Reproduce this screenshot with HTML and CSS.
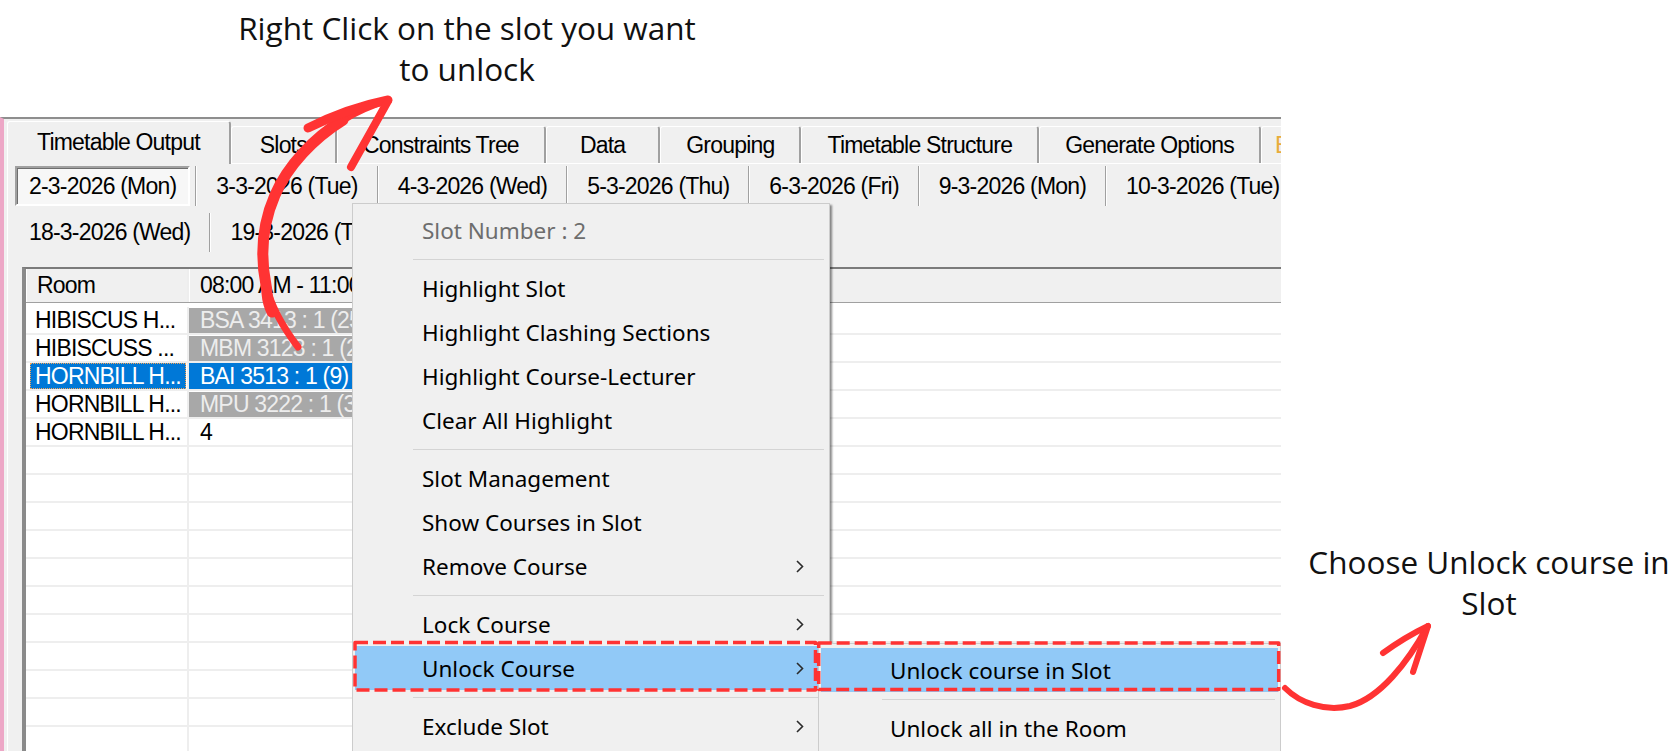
FILE: index.html
```html
<!DOCTYPE html>
<html lang="en">
<head>
<meta charset="utf-8">
<title>Timetable Output</title>
<link rel="stylesheet" href="styles.css">
</head>
<body>
<div class="page">
  <div class="note note-top">Right Click on the slot you want<br>to unlock</div>
  <div class="note note-side">Choose Unlock course in<br>Slot</div>

  <div class="window">
    <div class="tabstrip">
      <div class="tab active">Timetable Output</div>
      <div class="tab slim">Slots</div>
      <div class="tab">Constraints Tree</div>
      <div class="tab narrow">Data</div>
      <div class="tab">Grouping</div>
      <div class="tab">Timetable Structure</div>
      <div class="tab">Generate Options</div>
      <div class="tab more">Export</div>
    </div>

    <div class="tabbody">
      <div class="dayrow">
        <div class="day active">2-3-2026 (Mon)</div><span class="sep"></span>
        <div class="day">3-3-2026 (Tue)</div><span class="sep"></span>
        <div class="day">4-3-2026 (Wed)</div><span class="sep"></span>
        <div class="day">5-3-2026 (Thu)</div><span class="sep"></span>
        <div class="day">6-3-2026 (Fri)</div><span class="sep"></span>
        <div class="day">9-3-2026 (Mon)</div><span class="sep"></span>
        <div class="day">10-3-2026 (Tue)</div><span class="sep"></span>
        <div class="day">11-3-2026 (Wed)</div>
      </div>
      <div class="dayrow">
        <div class="day">18-3-2026 (Wed)</div><span class="sep"></span>
        <div class="day">19-3-2026 (Thu)</div>
      </div>

      <div class="grid">
        <div class="ghead">
          <div class="hcell c1">Room</div>
          <div class="hcell c2">08:00 AM - 11:00 AM</div>
        </div>
        <div class="gbody">
          <div class="grow"><div class="cell c1">HIBISCUS H...</div><div class="cell c2 locked">BSA 3413 : 1 (25)</div></div>
          <div class="grow"><div class="cell c1">HIBISCUSS ...</div><div class="cell c2 locked">MBM 3123 : 1 (25)</div></div>
          <div class="grow"><div class="cell c1 sel"><span class="lbl">HORNBILL H...</span></div><div class="cell c2 sel">BAI 3513 : 1 (9)</div></div>
          <div class="grow"><div class="cell c1">HORNBILL H...</div><div class="cell c2 locked">MPU 3222 : 1 (30)</div></div>
          <div class="grow"><div class="cell c1">HORNBILL H...</div><div class="cell c2">4</div></div>
          <div class="grow"><div class="cell c1"></div><div class="cell c2"></div></div>
          <div class="grow"><div class="cell c1"></div><div class="cell c2"></div></div>
          <div class="grow"><div class="cell c1"></div><div class="cell c2"></div></div>
          <div class="grow"><div class="cell c1"></div><div class="cell c2"></div></div>
          <div class="grow"><div class="cell c1"></div><div class="cell c2"></div></div>
          <div class="grow"><div class="cell c1"></div><div class="cell c2"></div></div>
          <div class="grow"><div class="cell c1"></div><div class="cell c2"></div></div>
          <div class="grow"><div class="cell c1"></div><div class="cell c2"></div></div>
          <div class="grow"><div class="cell c1"></div><div class="cell c2"></div></div>
          <div class="grow"><div class="cell c1"></div><div class="cell c2"></div></div>
          <div class="grow"><div class="cell c1"></div><div class="cell c2"></div></div>
        </div>
      </div>
    </div>
  </div>

  <!-- context menu for the selected slot -->
  <div class="menu ctx">
    <div class="mi disabled"><span class="label">Slot Number : 2</span></div>
    <div class="msep"></div>
    <div class="mi"><span class="label">Highlight Slot</span></div>
    <div class="mi"><span class="label">Highlight Clashing Sections</span></div>
    <div class="mi"><span class="label">Highlight Course-Lecturer</span></div>
    <div class="mi"><span class="label">Clear All Highlight</span></div>
    <div class="msep"></div>
    <div class="mi"><span class="label">Slot Management</span></div>
    <div class="mi"><span class="label">Show Courses in Slot</span></div>
    <div class="mi"><span class="label">Remove Course</span><svg class="chev" viewBox="0 0 8 13"><path d="M1 1l5.5 5.5L1 12"/></svg></div>
    <div class="msep"></div>
    <div class="mi"><span class="label">Lock Course</span><svg class="chev" viewBox="0 0 8 13"><path d="M1 1l5.5 5.5L1 12"/></svg></div>
    <div class="mi hot"><span class="label">Unlock Course</span><svg class="chev" viewBox="0 0 8 13"><path d="M1 1l5.5 5.5L1 12"/></svg></div>
    <div class="msep"></div>
    <div class="mi"><span class="label">Exclude Slot</span><svg class="chev" viewBox="0 0 8 13"><path d="M1 1l5.5 5.5L1 12"/></svg></div>
  </div>

  <!-- Unlock Course submenu -->
  <div class="menu sub">
    <div class="mi hot"><span class="label">Unlock course in Slot</span></div>
    <div class="msep"></div>
    <div class="mi"><span class="label">Unlock all in the Room</span></div>
  </div>

  <!-- hand-drawn callouts -->
  <svg class="marks" viewBox="0 0 1678 751">
    <g fill="none" stroke="#ff3333" stroke-linecap="round" stroke-linejoin="round">
      <path d="M298,347 C285,330 272,310 266,285 C260,255 262,225 275,195 C288,165 314,138 343,120 C358,111 372,105 388,100" stroke-width="7"/>
      <path d="M272,312 C266,300 268,296 266,285 C260,255 262,225 275,195 C288,165 314,138 343,120" stroke-width="11"/>
      <path d="M308,128 C332,116 358,106 388,100" stroke-width="9"/>
      <path d="M388,101 L351,167" stroke-width="8"/>

      <path d="M1285,688 C1300,703 1325,712 1350,706 C1380,698 1408,662 1427,627" stroke-width="6"/>
      <path d="M1383,653 Q1405,637 1428,626" stroke-width="6"/>
      <path d="M1428,626 L1413,672" stroke-width="6"/>

      <rect x="355" y="642.5" width="460.5" height="47.5" stroke-width="3.5" stroke-dasharray="13 5" stroke-linecap="butt"/>
      <rect x="818.7" y="643" width="460" height="46.5" stroke-width="3.5" stroke-dasharray="13 5" stroke-linecap="butt"/>
    </g>
  </svg>
</div>
</body>
</html>
```

FILE: styles.css
```css
* { box-sizing: border-box; }

html, body {
  margin: 0;
  padding: 0;
  background: #ffffff;
}

.page {
  position: relative;
  width: 1678px;
  height: 751px;
  overflow: hidden;
  background: #ffffff;
}

/* ---------- captions ---------- */
.note {
  position: absolute;
  font-family: "Open Sans", "Noto Sans", sans-serif;
  font-size: 31.5px;
  line-height: 41px;
  color: #111111;
  text-align: center;
  white-space: nowrap;
}
.note-top  { left: 167px;  width: 600px; top: 7px; }
.note-side { left: 1289px; width: 400px; top: 541px; }

/* ---------- application window ---------- */
.window {
  margin-top: 117px;
  width: 1281px;
  height: 634px;
  background: #f0f0f0;
  border-left: 4px solid #eda7c6;
  border-top: 2px solid #8e8e8e;
  padding-left: 3px;
  overflow: hidden;
  font-family: "Liberation Sans", Arial, sans-serif;
  font-size: 23px;
  letter-spacing: -0.8px;
  color: #000000;
}

/* main tab strip */
.tabstrip {
  display: flex;
  align-items: flex-end;
  height: 44px;
  padding-top: 2px;
  white-space: nowrap;
}
.tab {
  flex: none;
  height: 37px;
  padding: 0 25px;
  display: flex;
  align-items: center;
  background: #f0f0f0;
  border-top: 1px solid #ffffff;
  border-left: 1px solid #ffffff;
  border-right: 2px solid #a0a0a0;
  border-radius: 3px 3px 0 0;
}
.tab.slim { padding: 0 28px; }
.tab.narrow { padding: 0 33px; }
.tab.active {
  position: relative;
  z-index: 1;
  height: 43px;
  margin-bottom: -1px;
  padding: 0 29px 2px;
}
.tab.more {
  padding-left: 13px;
  color: #e8ad3c;
}

.tabbody {
  border-top: 1px solid #ffffff;
  border-left: 1px solid #ffffff;
  padding: 2px 0 0 7px;
}

/* day buttons */
.dayrow {
  display: flex;
  align-items: center;
  height: 40px;
  white-space: nowrap;
}
.dayrow + .dayrow {
  margin-top: 7px;
  height: 39px;
}
.day {
  flex: none;
  height: 100%;
  display: flex;
  align-items: center;
  padding: 0 12px;
  border: 2px solid transparent;
}
.day.active {
  background: #f7f7f7;
  border-color: #a0a0a0 #ffffff #ffffff #a0a0a0;
  box-shadow: inset 1px 1px 0 #6e6e6e;
}
.sep {
  flex: none;
  width: 2px;
  height: 100%;
  margin: 0 5px;
  border-left: 1px solid #a0a0a0;
  border-right: 1px solid #ffffff;
}

/* list grid */
.grid {
  margin: 15px 0 0 7px;
  width: 1300px;
  background: #ffffff;
  border-top: 2px solid #7b7b7b;
  border-left: 4px solid #8a8a8a;
}
.ghead {
  display: flex;
  height: 34px;
  background: #f0f0f0;
  border-bottom: 1px solid #a0a0a0;
}
.hcell {
  flex: none;
  height: 100%;
  display: flex;
  align-items: center;
  border-left: 1px solid #ffffff;
  border-right: 2px solid #a0a0a0;
  white-space: nowrap;
  overflow: hidden;
}
.ghead .c1 { padding-left: 10px; }
.ghead .c2 { padding-left: 10px; }

.gbody { padding-top: 4px; }
.grow {
  display: flex;
  height: 28px;
  border-bottom: 2px solid #eeeeee;
}
.cell {
  flex: none;
  height: 100%;
  display: flex;
  align-items: center;
  white-space: nowrap;
  overflow: hidden;
}
.c1 {
  width: 163px;
  padding-left: 9px;
  border-right: 2px solid #eeeeee;
}
.c2 {
  width: 320px;
  padding-left: 11px;
}
.c2.locked {
  background: #a8a8a8;
  color: #ededed;
  border-top: 1px solid #ffffff;
}
.c2.sel {
  background: #0078d7;
  color: #ffffff;
}
.c1.sel { padding-left: 4px; }
.c1.sel .lbl {
  flex: 1;
  height: 100%;
  display: flex;
  align-items: center;
  padding-left: 5px;
  margin-right: 1px;
  background: #0078d7;
  color: #ffffff;
  outline: 1px dotted #f3a55a;
  outline-offset: -1px;
}

/* ---------- popup menus ---------- */
.menu {
  position: absolute;
  background: #f0f0f0;
  border: 1px solid #cccccc;
  padding: 4px 2px;
  font-family: "Noto Sans", "Open Sans", sans-serif;
  font-size: 22.5px;
  color: #000000;
  white-space: nowrap;
}
.ctx {
  left: 352px;
  top: 203px;
  width: 478px;
  height: 580px;
  box-shadow: 2px 2px 2px rgba(0, 0, 0, 0.45);
}
.sub {
  left: 818px;
  top: 643px;
  width: 463px;
  height: 140px;
}
.mi {
  height: 44px;
  display: flex;
  align-items: center;
  padding-left: 67px;
  padding-right: 23px;
}
.sub .mi { padding-left: 69px; }
.mi .label { flex: 1; }
.mi.disabled { color: #6d6d6d; }
.mi.hot { background: #91c9f7; }
.msep {
  height: 14px;
  display: flex;
  align-items: center;
  padding-left: 58px;
  padding-right: 3px;
}
.sub .msep { padding-left: 61px; }
.msep::before {
  content: "";
  flex: 1;
  height: 1px;
  background: #d4d4d4;
}
.chev {
  width: 8px;
  height: 13px;
  fill: none;
  stroke: #2b2b2b;
  stroke-width: 1.6;
}

/* overlay for callouts */
.marks {
  position: absolute;
  left: 0;
  top: 0;
  width: 1678px;
  height: 751px;
  pointer-events: none;
}
```
